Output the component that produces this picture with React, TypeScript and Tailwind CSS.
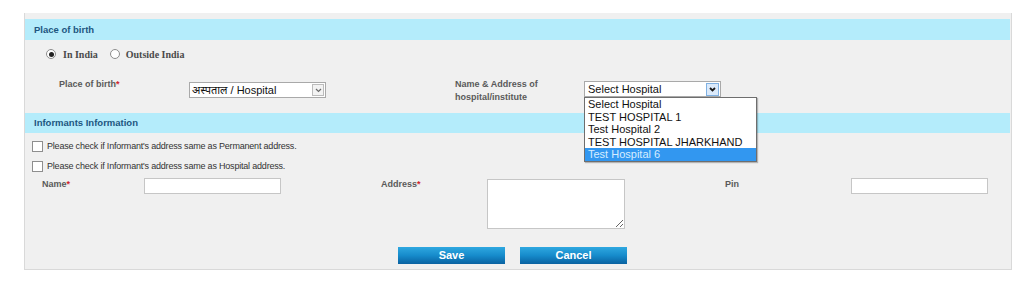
import React from "react";

const hospitals = [
  "Select Hospital",
  "TEST HOSPITAL 1",
  "Test Hospital 2",
  "TEST HOSPITAL JHARKHAND",
  "Test Hospital 6",
];

function Chevron({ dark }: { dark?: boolean }) {
  return (
    <svg width="7" height="5" viewBox="0 0 7 5">
      <polyline
        points="1,1 3.5,3.5 6,1"
        fill="none"
        stroke={dark ? "#1a1a1a" : "#6b6b6b"}
        strokeWidth={dark ? 1.8 : 1.2}
      />
    </svg>
  );
}

function Req({ children }: { children: React.ReactNode }) {
  return (
    <span>
      {children}
      <span className="text-[#d0242b]">*</span>
    </span>
  );
}

function Radio({ checked }: { checked?: boolean }) {
  return (
    <span className="flex h-[10px] w-[10px] items-center justify-center rounded-full border border-[#8d8d8d] bg-white">
      {checked && <span className="h-[5px] w-[5px] rounded-full bg-[#222]" />}
    </span>
  );
}

function Check() {
  return <span className="h-[11px] w-[11px] border border-[#8e8e8e] bg-white" />;
}

export default function App() {
  const label = "text-[9px] font-bold leading-[12.5px] text-[#5a5a5a]";
  const sans = { fontFamily: '"Liberation Sans", Arial, sans-serif' };

  return (
    <div className="min-h-[285px] bg-white pl-[24px] pt-[13px]" style={sans}>
      <div className="relative h-[257px] w-[988px] border-x border-b border-[#d9d9d9] bg-[#f0f0f0] pt-[6px]">
        {/* Place of birth */}
        <div className="mr-px flex h-[21px] items-center bg-[#b4ecfb] pl-[9px] pt-px text-[9.5px] font-bold text-[#1d5680]">
          Place of birth
        </div>

        <div
          className="mt-[6px] flex h-[16px] items-center pl-[21px] text-[10px] font-bold text-[#4a4a4a]"
          style={{ fontFamily: '"Liberation Serif", "Times New Roman", serif' }}
        >
          <Radio checked />
          <span className="ml-[7px]">In India</span>
          <span className="ml-[12px]">
            <Radio />
          </span>
          <span className="ml-[6px]">Outside India</span>
        </div>

        <div className="mt-[16px] flex h-[35px] items-start pl-[34px]">
          <div className={`w-[130px] ${label}`}>
            <Req>Place of birth</Req>
          </div>
          <div className="mt-[4px] flex h-[16px] w-[137px] items-center border border-[#a9a9a9] bg-white pl-[2px] pr-px">
            <span className="flex-1 text-[11px] text-[#111]" style={{ fontFamily: '"Liberation Sans", "Noto Sans Devanagari", "Lohit Devanagari", sans-serif' }}>
              अस्पताल / Hospital
            </span>
            <span className="flex h-[12px] w-[12px] items-center justify-center border border-[#bcbcbc] bg-[#f3f3f3]">
              <Chevron />
            </span>
          </div>
          <div className={`ml-[129px] w-[129px] ${label}`}>
            Name &amp; Address of
            <br />
            hospital/institute
          </div>
          <div className="relative mt-[3px]">
            <div className="flex h-[16px] w-[137px] items-center border border-[#a9a9a9] bg-white pl-[3px] pr-px">
              <span className="flex-1 text-[11px] text-[#111]">Select Hospital</span>
              <span className="flex h-[13px] w-[13px] items-center justify-center border border-[#7fb1e3] bg-[#dbeafb]">
                <Chevron dark />
              </span>
            </div>
            <div className="absolute left-0 top-[16px] z-10 w-[173px] border border-[#6e6e6e] bg-white shadow-[1px_1px_1px_rgba(0,0,0,0.25)]">
              {hospitals.map((h, i) => (
                <div
                  key={h}
                  className={`h-[12.6px] pl-[3px] text-[11px] leading-[12.6px] ${
                    i === 4 ? "bg-[#3297f0] text-[#d6ecff]" : "text-[#111]"
                  }`}
                >
                  {h}
                </div>
              ))}
            </div>
          </div>
        </div>

        {/* Informants Information */}
        <div className="mr-px flex h-[20px] items-center bg-[#b4ecfb] pl-[9px] pt-px text-[9.5px] font-bold text-[#1d5680]">
          Informants Information
        </div>

        <div className="pt-[2px] text-[9px] tracking-[-0.2px] text-[#333]">
          <div className="flex h-[20px] items-center gap-[4px] pl-[7px] pt-[3px]">
            <Check />
            <span>Please check if Informant's address same as Permanent address.</span>
          </div>
          <div className="flex h-[20px] items-center gap-[4px] pl-[7px] pt-[3px]">
            <Check />
            <span>Please check if Informant's address same as Hospital address.</span>
          </div>
        </div>

        <div className="flex items-start pl-[17px]">
          <div className={`mt-[3px] w-[102px] ${label}`}>
            <Req>Name</Req>
          </div>
          <input className="mt-[3px] h-[16px] w-[137px] border border-[#c6c6c6] bg-white outline-none" />
          <div className={`ml-[100px] mt-[3px] w-[106px] ${label}`}>
            <Req>Address</Req>
          </div>
          <textarea className="mt-[4px] h-[50px] w-[138px] border border-[#c6c6c6] bg-white outline-none" />
          <div className={`ml-[100px] mt-[3px] w-[126px] ${label}`}>Pin</div>
          <input className="mt-[3px] h-[16px] w-[137px] border border-[#c6c6c6] bg-white outline-none" />
        </div>

        <div className="mt-[18px] flex gap-[15px] pl-[373px]">
          {["Save", "Cancel"].map((b) => (
            <button
              key={b}
              className="h-[17px] w-[107px] bg-linear-to-b from-[#2ea8e0] via-[#168bcb] to-[#0a62a1] text-[11px] font-bold text-white"
            >
              {b}
            </button>
          ))}
        </div>
      </div>
    </div>
  );
}
